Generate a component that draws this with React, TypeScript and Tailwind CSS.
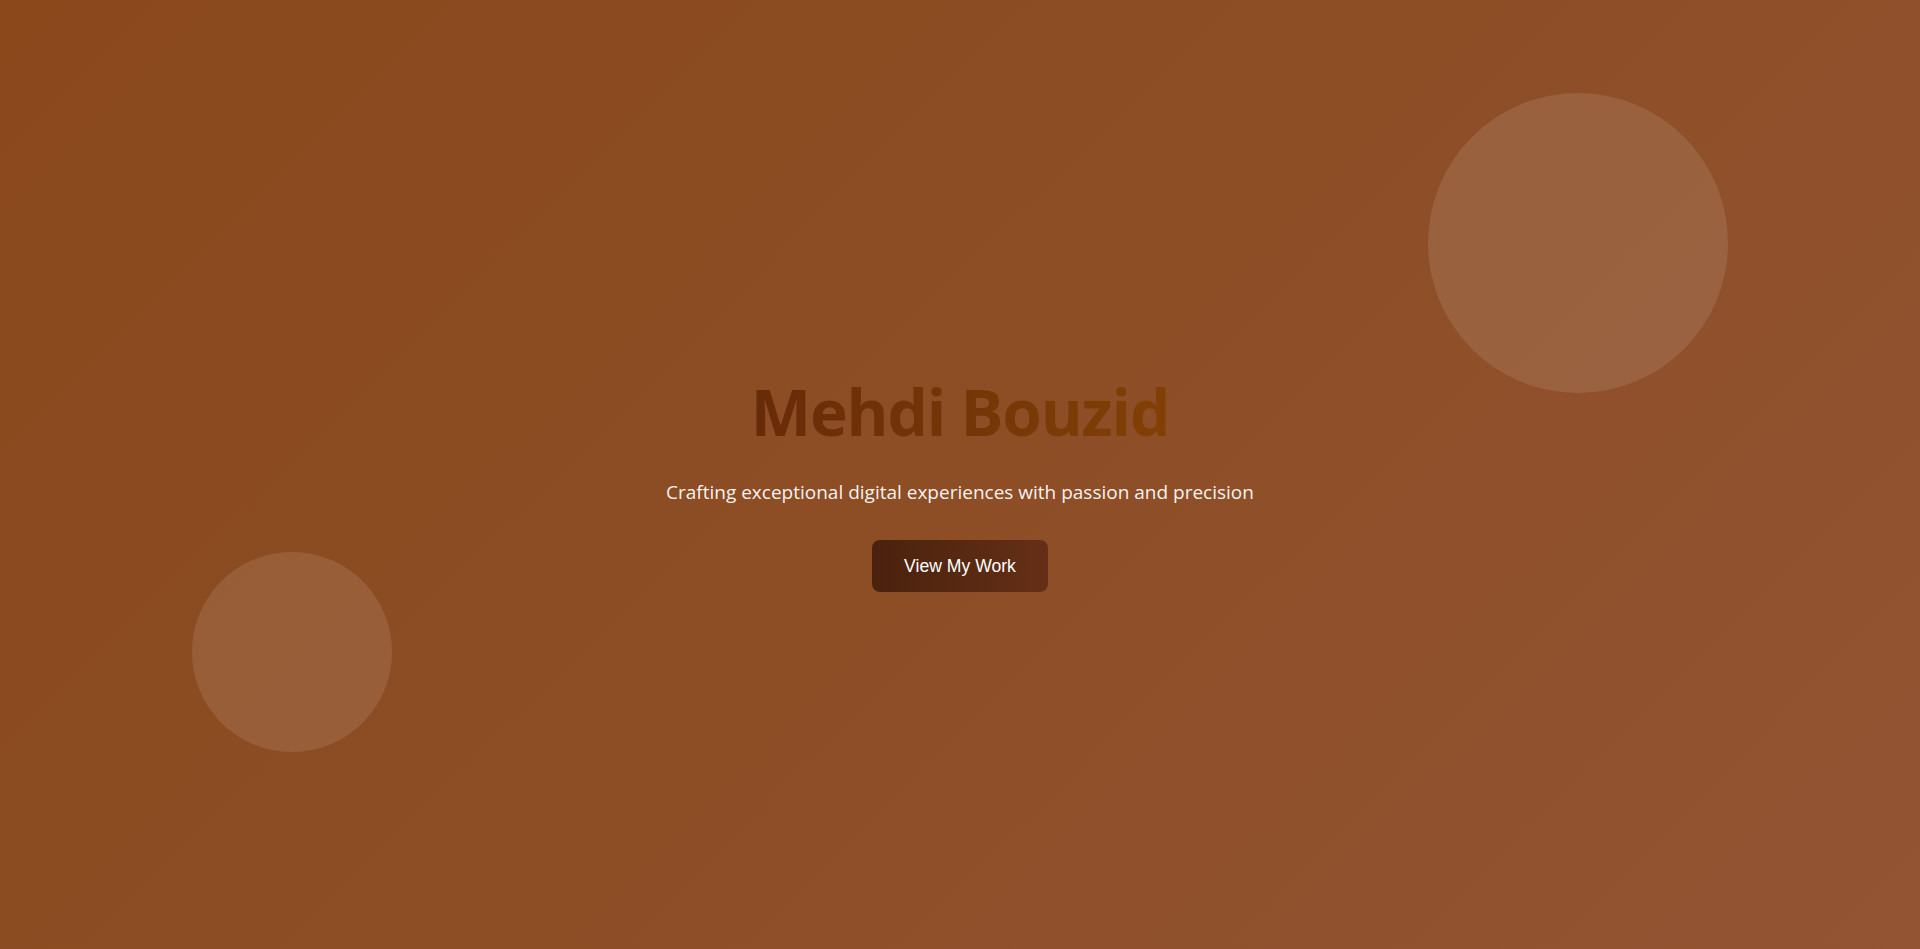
import React from "react";

export default function App() {
  return (
    <div className="relative min-h-screen w-full overflow-hidden bg-[linear-gradient(135deg,#8a481b_0%,#8d4e26_50%,#925433_100%)] flex flex-col items-center justify-center text-center font-['Open_Sans',sans-serif]">
      <div className="absolute top-[93px] right-[192px] w-[300px] h-[300px] rounded-full bg-white/10" />
      <div className="absolute top-[552px] left-[192px] w-[200px] h-[200px] rounded-full bg-white/10" />
      <div className="relative flex flex-col items-center pt-[17px]">
        <h1 className="text-[64px] leading-[1.2] font-bold tracking-[-1.2px] bg-gradient-to-r from-[#672b09] to-[#824004] bg-clip-text text-transparent">
          Mehdi Bouzid
        </h1>
        <p className="mt-[27px] text-[19px] leading-[1.5] text-white/95">
          Crafting exceptional digital experiences with passion and precision
        </p>
        <button className="mt-[33px] px-8 py-4 rounded-lg bg-gradient-to-r from-[#4a220e] to-[#652f16] text-white text-[17.6px] leading-[1.15] font-['Liberation_Sans',Arial,sans-serif]">
          View My Work
        </button>
      </div>
    </div>
  );
}
